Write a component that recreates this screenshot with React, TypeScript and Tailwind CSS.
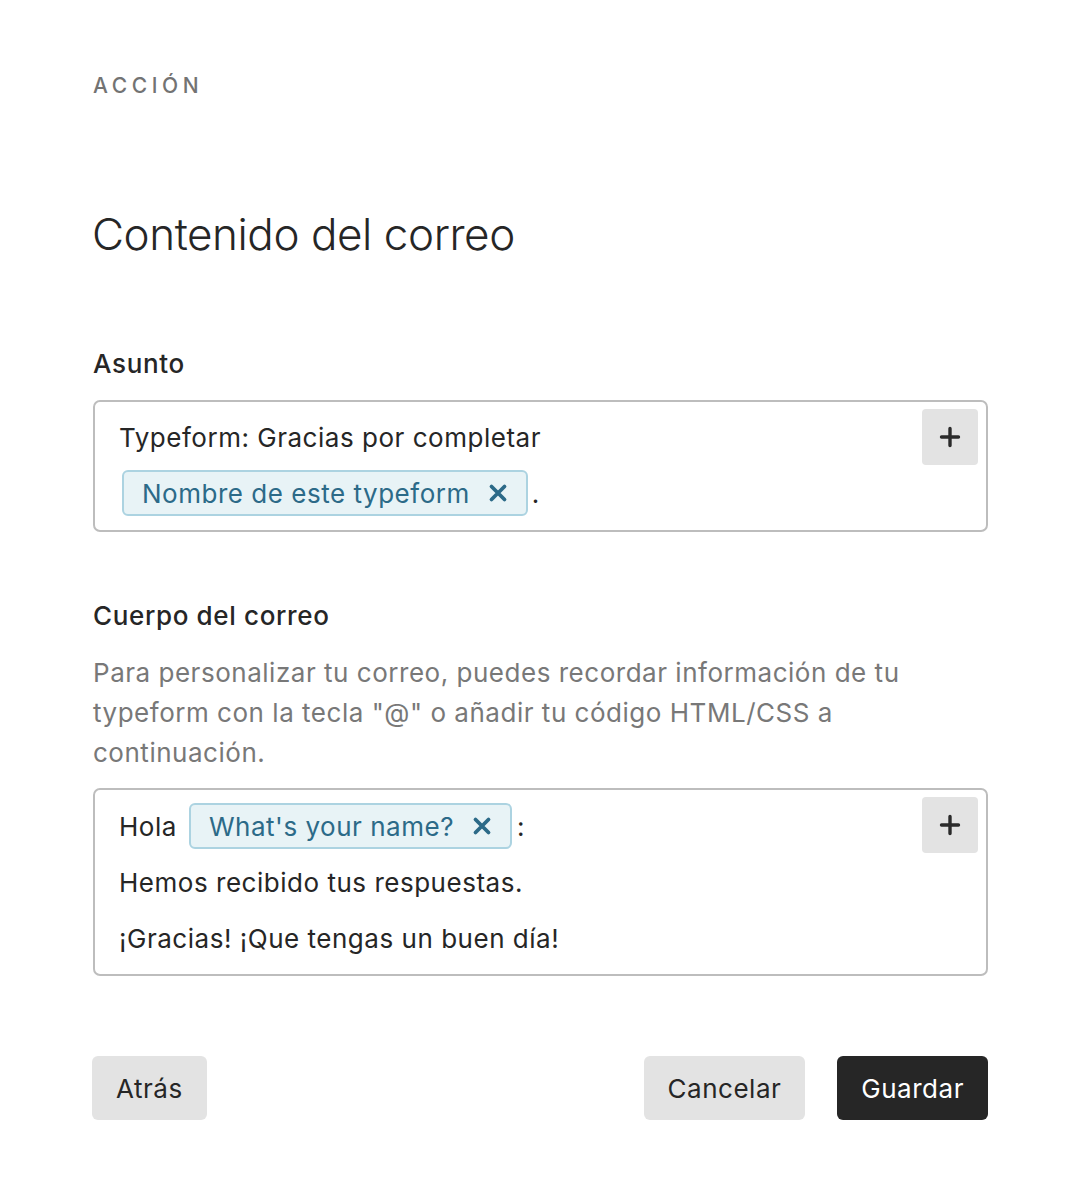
import React from 'react';

const font = { fontFamily: 'Inter, "Noto Sans", sans-serif' };

const CloseIcon: React.FC = () => (
  <svg width="20" height="20" viewBox="0 0 20 20" className="shrink-0">
    <path d="M3.5 3.5L16.5 16.5M16.5 3.5L3.5 16.5" stroke="#2c6a88" strokeWidth="3.8" strokeLinecap="round" />
  </svg>
);

const PlusIcon: React.FC = () => (
  <svg width="22" height="22" viewBox="0 0 22 22">
    <path d="M11 2.5V19.5M2.5 11H19.5" stroke="#2b2b2b" strokeWidth="3.4" strokeLinecap="round" />
  </svg>
);

const Chip: React.FC<{ label: string }> = ({ label }) => (
  <span className="inline-flex items-center h-[46px] pl-[18px] pr-[18px] gap-[18px] rounded-[6px] border-2 border-[#acd3e1] bg-[#e8f3f6] text-[#2c6a88] align-middle">
    {label}
    <CloseIcon />
  </span>
);

const AddButton: React.FC = () => (
  <button className="absolute top-[7px] right-[8px] w-[56px] h-[56px] rounded-[4px] bg-[#e3e3e3] flex items-center justify-center">
    <PlusIcon />
  </button>
);

export default function App() {
  return (
    <div className="min-h-[1180px] bg-white text-[#262626] pl-[93px] pr-[96px] pt-[72px]" style={font}>
      <div className="text-[21px] leading-[28px] tracking-[0.22em] font-medium text-[#737373]">ACCIÓN</div>

      <h1 className="mt-[106px] -ml-[1px] text-[44px] leading-[56px] font-light tracking-[-0.01em]">Contenido del correo</h1>

      <h2 className="mt-[86px] text-[26px] leading-[32px] font-medium tracking-[0.025em]">Asunto</h2>
      <div className="relative mt-[20px] border-2 border-[#bdbdbd] rounded-[7px] pl-[24px] pr-[80px] pt-[7px] pb-[9px] text-[26px] tracking-[0.02em]">
        <div className="h-[56px] flex items-center">Typeform: Gracias por completar</div>
        <div className="h-[56px] flex items-center">
          <span className="ml-[3px]"><Chip label="Nombre de este typeform" /></span>
          <span className="ml-[4px]">.</span>
        </div>
        <AddButton />
      </div>

      <h2 className="mt-[68px] text-[26px] leading-[32px] font-medium tracking-[0.025em]">Cuerpo del correo</h2>
      <p className="mt-[21px] text-[26px] leading-[40px] tracking-[0.02em] text-[#787878] pr-[60px]">
        Para personalizar tu correo, puedes recordar información de tu typeform con la tecla "@" o añadir tu código HTML/CSS a continuación.
      </p>
      <div className="relative mt-[15px] border-2 border-[#bdbdbd] rounded-[7px] pl-[24px] pr-[80px] py-[8px] text-[26px] tracking-[0.02em]">
        <div className="h-[56px] flex items-center">
          <span>Hola</span>
          <span className="ml-[12px]"><Chip label="What's your name?" /></span>
          <span className="ml-[5px]">:</span>
        </div>
        <div className="h-[56px] flex items-center">Hemos recibido tus respuestas.</div>
        <div className="h-[56px] flex items-center">¡Gracias! ¡Que tengas un buen día!</div>
        <AddButton />
      </div>

      <div className="mt-[80px] -ml-[1px] flex items-center justify-between text-[26px] tracking-[0.02em]">
        <button className="h-[64px] px-[24px] rounded-[6px] bg-[#e3e3e3]">Atrás</button>
        <div className="flex items-center gap-[32px]">
          <button className="h-[64px] px-[24px] rounded-[6px] bg-[#e3e3e3]">Cancelar</button>
          <button className="h-[64px] px-[24px] rounded-[6px] bg-[#262626] text-white">Guardar</button>
        </div>
      </div>
    </div>
  );
}
